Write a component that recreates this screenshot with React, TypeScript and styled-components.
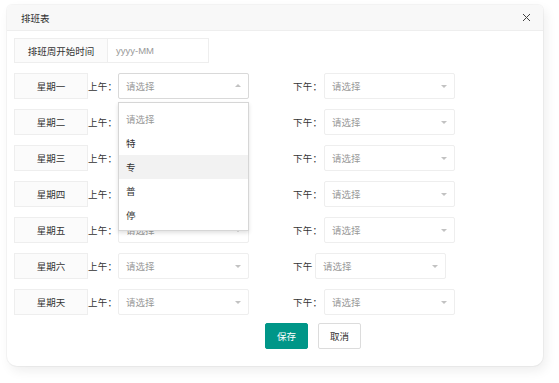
import React from "react";
import styled, { createGlobalStyle } from "styled-components";

const GlobalStyle = createGlobalStyle`
  html, body { margin: 0; padding: 0; background: #fff; }
  body {
    font-family: "Helvetica Neue", "Liberation Sans", "Noto Sans CJK SC", sans-serif;
    color: #333;
  }
  * { box-sizing: border-box; }
`;

const Page = styled.div`
  padding: 5px 0 0 7px;
  width: 559px;
  height: 383px;
  overflow: hidden;
`;

const Dialog = styled.div`
  width: 536px;
  height: 361px;
  background: #fff;
  border-radius: 5px 5px 10px 10px;
  box-shadow: 0 0 0 1px rgba(0, 0, 0, 0.035), 3px 5px 12px rgba(0, 0, 0, 0.07);
  display: flex;
  flex-direction: column;
`;

const Header = styled.div`
  height: 26px;
  background: #f8f8f8;
  border-bottom: 1px solid #eee;
  border-radius: 5px 5px 0 0;
  display: flex;
  align-items: center;
  justify-content: space-between;
  padding: 0 12px 0 14px;
  font-size: 9.5px;
  color: #333;
`;

const Close = styled.button`
  border: 0;
  background: none;
  padding: 0;
  width: 10px;
  height: 10px;
  display: flex;
  align-items: center;
  justify-content: center;
  cursor: pointer;
`;

const Body = styled.div`
  padding: 7px 7px;
  display: flex;
  flex-direction: column;
`;

const PaneItem = styled.div`
  display: flex;
  height: 25px;
  margin-bottom: 10px;
`;

const PaneLabel = styled.div<{ $w: number }>`
  width: ${(p) => p.$w}px;
  height: 100%;
  background: #fbfbfb;
  border: 1px solid #eee;
  display: flex;
  align-items: center;
  justify-content: center;
  font-size: 9.5px;
  color: #333;
`;

const TextInput = styled.div`
  width: 101px;
  height: 100%;
  border: 1px solid #eee;
  border-left: 0;
  display: flex;
  align-items: center;
  padding-left: 8px;
  font-size: 9.5px;
  color: #999;
`;

const Row = styled.div<{ $raised?: boolean }>`
  display: flex;
  align-items: center;
  height: 26px;
  margin-bottom: 10px;
  position: ${(p) => (p.$raised ? "relative" : "static")};
  z-index: ${(p) => (p.$raised ? 5 : "auto")};
`;

const Group = styled.div<{ $offset?: number }>`
  display: flex;
  align-items: center;
  height: 100%;
  margin-left: ${(p) => p.$offset ?? 0}px;
`;

const HalfLabel = styled.div<{ $w: number }>`
  width: ${(p) => p.$w}px;
  font-size: 9.5px;
  color: #333;
  white-space: nowrap;
  letter-spacing: 0.3px;
`;

const SelectWrap = styled.div`
  position: relative;
  width: 131px;
  height: 26px;
`;

const SelectBox = styled.div<{ $open?: boolean }>`
  width: 100%;
  height: 100%;
  border: 1px solid ${(p) => (p.$open ? "#d9d9d9" : "#eee")};
  border-radius: 2px;
  background: #fff;
  display: flex;
  align-items: center;
  justify-content: space-between;
  padding: 0 7px 0 7px;
  font-size: 9.5px;
  color: #999;
`;

const Arrow = styled.span<{ $up?: boolean }>`
  width: 0;
  height: 0;
  border-left: 3px solid transparent;
  border-right: 3px solid transparent;
  ${(p) =>
    p.$up
      ? "border-bottom: 3px solid #c2c2c2; margin-top: -1px;"
      : "border-top: 3px solid #c2c2c2; margin-top: 1px;"}
`;

const Menu = styled.div`
  position: absolute;
  top: 29px;
  left: 0;
  width: 131px;
  background: #fff;
  border: 1px solid #d6d6d6;
  box-shadow: 0 2px 4px rgba(0, 0, 0, 0.12);
  padding: 4px 0 3px;
  z-index: 10;
`;

const Option = styled.div<{ $muted?: boolean; $hover?: boolean }>`
  height: 24px;
  display: flex;
  align-items: center;
  padding-left: 7px;
  font-size: 9.5px;
  color: ${(p) => (p.$muted ? "#999" : "#333")};
  background: ${(p) => (p.$hover ? "#f2f2f2" : "#fff")};
`;

const Actions = styled.div`
  display: flex;
  gap: 10px;
  padding-left: 251px;
  margin-top: -2px;
`;

const Button = styled.button<{ $primary?: boolean }>`
  width: 43px;
  height: 26px;
  border-radius: 2px;
  font-family: inherit;
  font-size: 9.5px;
  padding: 0;
  cursor: pointer;
  background: ${(p) => (p.$primary ? "#009688" : "#fff")};
  color: ${(p) => (p.$primary ? "#fff" : "#333")};
  border: 1px solid ${(p) => (p.$primary ? "#009688" : "#dcdcdc")};
`;

const days = ["星期一", "星期二", "星期三", "星期四", "星期五", "星期六", "星期天"];
const options = ["特", "专", "普", "停"];

function Select({ open }: { open?: boolean }) {
  return (
    <SelectWrap>
      <SelectBox $open={open}>
        <span>请选择</span>
        <Arrow $up={open} />
      </SelectBox>
      {open && (
        <Menu>
          <Option $muted>请选择</Option>
          {options.map((o) => (
            <Option key={o} $hover={o === "专"}>
              {o}
            </Option>
          ))}
        </Menu>
      )}
    </SelectWrap>
  );
}

export default function App() {
  return (
    <>
      <GlobalStyle />
      <Page>
        <Dialog>
          <Header>
            <span>排班表</span>
            <Close aria-label="关闭">
              <svg width="9" height="9" viewBox="0 0 9 9">
                <path d="M1 1L8 8M8 1L1 8" stroke="#444" strokeWidth="1" />
              </svg>
            </Close>
          </Header>
          <Body>
            <PaneItem>
              <PaneLabel $w={94}>排班周开始时间</PaneLabel>
              <TextInput>yyyy-MM</TextInput>
            </PaneItem>
            {days.map((d, i) => {
              const sat = d === "星期六";
              return (
                <Row key={d} $raised={i === 0}>
                  <PaneLabel $w={74}>{d}</PaneLabel>
                  <HalfLabel $w={30}>上午：</HalfLabel>
                  <Select open={i === 0} />
                  <Group $offset={44}>
                    <HalfLabel $w={sat ? 22 : 31}>{sat ? "下午" : "下午："}</HalfLabel>
                    <Select />
                  </Group>
                </Row>
              );
            })}
            <Actions>
              <Button $primary>保存</Button>
              <Button>取消</Button>
            </Actions>
          </Body>
        </Dialog>
      </Page>
    </>
  );
}
